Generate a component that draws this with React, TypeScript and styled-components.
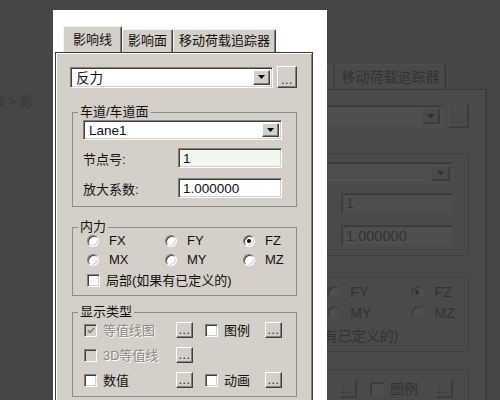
import React from "react";
import styled, { createGlobalStyle, css } from "styled-components";

const face = "#d4d0c8";
const uiFont = `"Liberation Sans", "Noto Sans CJK SC", sans-serif`;

const GlobalStyle = createGlobalStyle`
  html, body {
    margin: 0;
    padding: 0;
    width: 500px;
    height: 400px;
    overflow: hidden;
  }
  body {
    font-family: ${uiFont};
    font-size: 13px;
    color: #111;
    background: #b0b0b0;
  }
`;

const sunken = css`
  border: 1px solid;
  border-color: #808080 #fff #fff #808080;
  box-shadow: inset 1px 1px 0 #404040, inset -1px -1px 0 ${face};
`;

const raised = css`
  border: 1px solid;
  border-color: #fff #404040 #404040 #fff;
  box-shadow: inset -1px -1px 0 #808080, inset 1px 1px 0 ${face};
`;

/* page behind the lightbox */
const BackPage = styled.div`
  display: flex;
  align-items: flex-start;
  height: 400px;
  box-sizing: border-box;
  padding-top: 61px;
  background: #b0b0b0;
`;

const Breadcrumb = styled.div`
  flex: none;
  width: 229px;
  margin-left: -21px;
  margin-top: 30px;
  color: #444;
  font-size: 13px;
  white-space: nowrap;
`;

const Zoomed = styled.div`
  zoom: 1.08;
`;

const Dim = styled.div`
  position: fixed;
  inset: 0;
  background: rgba(55, 55, 55, 0.88);
`;

const Lightbox = styled.div`
  position: absolute;
  left: 53px;
  top: 10px;
  width: 274px;
  height: 400px;
  box-sizing: border-box;
  padding: 16px 14px 0 2px;
  background: #fff;
  overflow: hidden;
`;

/* the dialog */
const DialogFrame = styled.div`
  width: 258px;
`;

const TabStrip = styled.div`
  display: flex;
  align-items: flex-end;
  height: 26px;
  padding-left: 8px;
`;

const Tab = styled.div<{ $active?: boolean }>`
  box-sizing: border-box;
  height: ${(p) => (p.$active ? 26 : 23)}px;
  padding: 0 ${(p) => (p.$active ? 9 : 5)}px;
  display: flex;
  align-items: center;
  background: ${face};
  border: 1px solid #f4f4f4;
  border-bottom: none;
  border-right-color: #404040;
  border-radius: 2px 2px 0 0;
  box-shadow: inset -1px 0 0 #808080;
  font-size: 13px;
  line-height: 14px;
  white-space: nowrap;
`;

const Panel = styled.div`
  box-sizing: border-box;
  background: ${face};
  border: 1px solid #3c3c3c;
  box-shadow: inset 1px 1px 0 #fff, inset -1px -1px 0 #808080;
  padding: 13px 14px 14px 14px;
`;

const TopRow = styled.div`
  display: flex;
  align-items: center;
  gap: 4px;
  height: 22px;
`;

const ComboBox = styled.div<{ $w: number; $h: number }>`
  ${sunken};
  box-sizing: border-box;
  width: ${(p) => p.$w}px;
  height: ${(p) => p.$h}px;
  padding: 2px;
  display: flex;
  align-items: stretch;
  background: #fff;
`;

const ComboText = styled.span`
  flex: 1;
  display: flex;
  align-items: center;
  padding-left: 3px;
  font-size: 13.5px;
`;

const DropButton = styled.span`
  ${raised};
  box-sizing: border-box;
  width: 17px;
  display: flex;
  align-items: center;
  justify-content: center;
  background: ${face};
`;

const DotButton = styled.button<{ $w: number; $h: number }>`
  ${raised};
  box-sizing: border-box;
  width: ${(p) => p.$w}px;
  height: ${(p) => p.$h}px;
  padding: 0 0 2px;
  display: flex;
  align-items: flex-end;
  justify-content: center;
  background: ${face};
  color: #222;
  font: 12px/10px ${uiFont};
  letter-spacing: 0.5px;
`;

const Group = styled.fieldset<{ $mt: number; $pt: number; $pl: number }>`
  box-sizing: border-box;
  width: 225px;
  min-width: 0;
  margin: ${(p) => p.$mt}px 0 0 2px;
  padding: ${(p) => p.$pt}px 14px 8px ${(p) => p.$pl}px;
  border: 1px solid #8e8c88;
`;

const Legend = styled.legend<{ $shift: number }>`
  padding: 0 2px;
  margin-left: ${(p) => p.$shift}px;
  font-size: 13px;
  line-height: 14px;
`;

const FieldRow = styled.div<{ $mt: number }>`
  display: flex;
  align-items: center;
  margin-top: ${(p) => p.$mt}px;
`;

const FieldLabel = styled.span`
  width: 95px;
  font-size: 13px;
`;

const TextBox = styled.div<{ $tint?: boolean }>`
  ${sunken};
  box-sizing: border-box;
  width: 104px;
  height: 20px;
  padding-left: 4px;
  display: flex;
  align-items: center;
  background: ${(p) => (p.$tint ? "#f2f6f1" : "#fff")};
  font-size: 13.5px;
`;

const RadioGrid = styled.div`
  display: grid;
  grid-template-columns: 78px 78px 1fr;
  grid-auto-rows: 13px;
  row-gap: 6px;
`;

const Option = styled.label<{ $gap: number; $disabled?: boolean; $mt?: number }>`
  display: flex;
  align-items: center;
  gap: ${(p) => p.$gap}px;
  margin-top: ${(p) => p.$mt ?? 0}px;
  font-size: 13px;
  line-height: 13px;
  white-space: nowrap;
  color: ${(p) => (p.$disabled ? "#8a8782" : "#111")};
  text-shadow: ${(p) => (p.$disabled ? "1px 1px 0 #fff" : "none")};
`;

const RadioCircle = styled.span`
  ${sunken};
  box-sizing: border-box;
  flex: none;
  width: 12px;
  height: 12px;
  border-radius: 50%;
  display: flex;
  align-items: center;
  justify-content: center;
  background: #fff;
`;

const RadioDot = styled.span`
  width: 4px;
  height: 4px;
  border-radius: 50%;
  background: #000;
`;

const CheckSquare = styled.span<{ $disabled?: boolean }>`
  ${sunken};
  box-sizing: border-box;
  flex: none;
  width: 13px;
  height: 13px;
  display: flex;
  align-items: center;
  justify-content: center;
  background: ${(p) => (p.$disabled ? face : "#fff")};
`;

const DisplayGrid = styled.div`
  display: grid;
  grid-template-columns: 92px 29px 60px 17px;
  grid-auto-rows: 16px;
  row-gap: 9px;
  align-items: center;
`;

const DownArrow = () => (
  <svg width="7" height="4" viewBox="0 0 7 4">
    <polygon points="0,0 7,0 3.5,4" fill="#000" />
  </svg>
);

const Combo: React.FC<{ w: number; h: number; value: string }> = ({ w, h, value }) => (
  <ComboBox $w={w} $h={h}>
    <ComboText>{value}</ComboText>
    <DropButton>
      <DownArrow />
    </DropButton>
  </ComboBox>
);

const Radio: React.FC<{ label: string; checked?: boolean }> = ({ label, checked }) => (
  <Option $gap={10}>
    <RadioCircle>{checked && <RadioDot />}</RadioCircle>
    {label}
  </Option>
);

const Check: React.FC<{ label: string; checked?: boolean; disabled?: boolean; mt?: number }> = ({
  label,
  checked,
  disabled,
  mt,
}) => (
  <Option $gap={6} $disabled={disabled} $mt={mt}>
    <CheckSquare $disabled={disabled}>
      {checked && (
        <svg width="8" height="7" viewBox="0 0 8 7">
          <polyline
            points="0.8,3.2 3,5.4 7.2,1"
            fill="none"
            stroke={disabled ? "#808080" : "#000"}
            strokeWidth="1.8"
          />
        </svg>
      )}
    </CheckSquare>
    {label}
  </Option>
);

const Dialog: React.FC = () => (
  <DialogFrame>
    <TabStrip>
      <Tab $active>影响线</Tab>
      <Tab>影响面</Tab>
      <Tab>移动荷载追踪器</Tab>
    </TabStrip>
    <Panel>
      <TopRow>
        <Combo w={203} h={21} value="反力" />
        <DotButton $w={20} $h={22}>...</DotButton>
      </TopRow>

      <Group $mt={17} $pt={1} $pl={10}>
        <Legend $shift={-5}>车道/车道面</Legend>
        <Combo w={199} h={20} value="Lane1" />
        <FieldRow $mt={8}>
          <FieldLabel>节点号:</FieldLabel>
          <TextBox $tint>1</TextBox>
        </FieldRow>
        <FieldRow $mt={10}>
          <FieldLabel>放大系数:</FieldLabel>
          <TextBox>1.000000</TextBox>
        </FieldRow>
      </Group>

      <Group $mt={13} $pt={0} $pl={14}>
        <Legend $shift={-9}>内力</Legend>
        <RadioGrid>
          <Radio label="FX" />
          <Radio label="FY" />
          <Radio label="FZ" checked />
          <Radio label="MX" />
          <Radio label="MY" />
          <Radio label="MZ" />
        </RadioGrid>
        <Check label="局部(如果有已定义的)" mt={8} />
      </Group>

      <Group $mt={9} $pt={3} $pl={11}>
        <Legend $shift={-6}>显示类型</Legend>
        <DisplayGrid>
          <Check label="等值线图" checked disabled />
          <div>
            <DotButton $w={17} $h={16}>...</DotButton>
          </div>
          <Check label="图例" />
          <DotButton $w={17} $h={16}>...</DotButton>

          <Check label="3D等值线" disabled />
          <div>
            <DotButton $w={17} $h={16}>...</DotButton>
          </div>
          <span />
          <span />

          <Check label="数值" />
          <div>
            <DotButton $w={17} $h={16}>...</DotButton>
          </div>
          <Check label="动画" />
          <DotButton $w={17} $h={16}>...</DotButton>
        </DisplayGrid>
      </Group>
    </Panel>
  </DialogFrame>
);

const App: React.FC = () => (
  <>
    <GlobalStyle />
    <BackPage>
      <Breadcrumb>结果 &gt; 影</Breadcrumb>
      <Zoomed>
        <Dialog />
      </Zoomed>
    </BackPage>
    <Dim />
    <Lightbox>
      <Dialog />
    </Lightbox>
  </>
);

export default App;
